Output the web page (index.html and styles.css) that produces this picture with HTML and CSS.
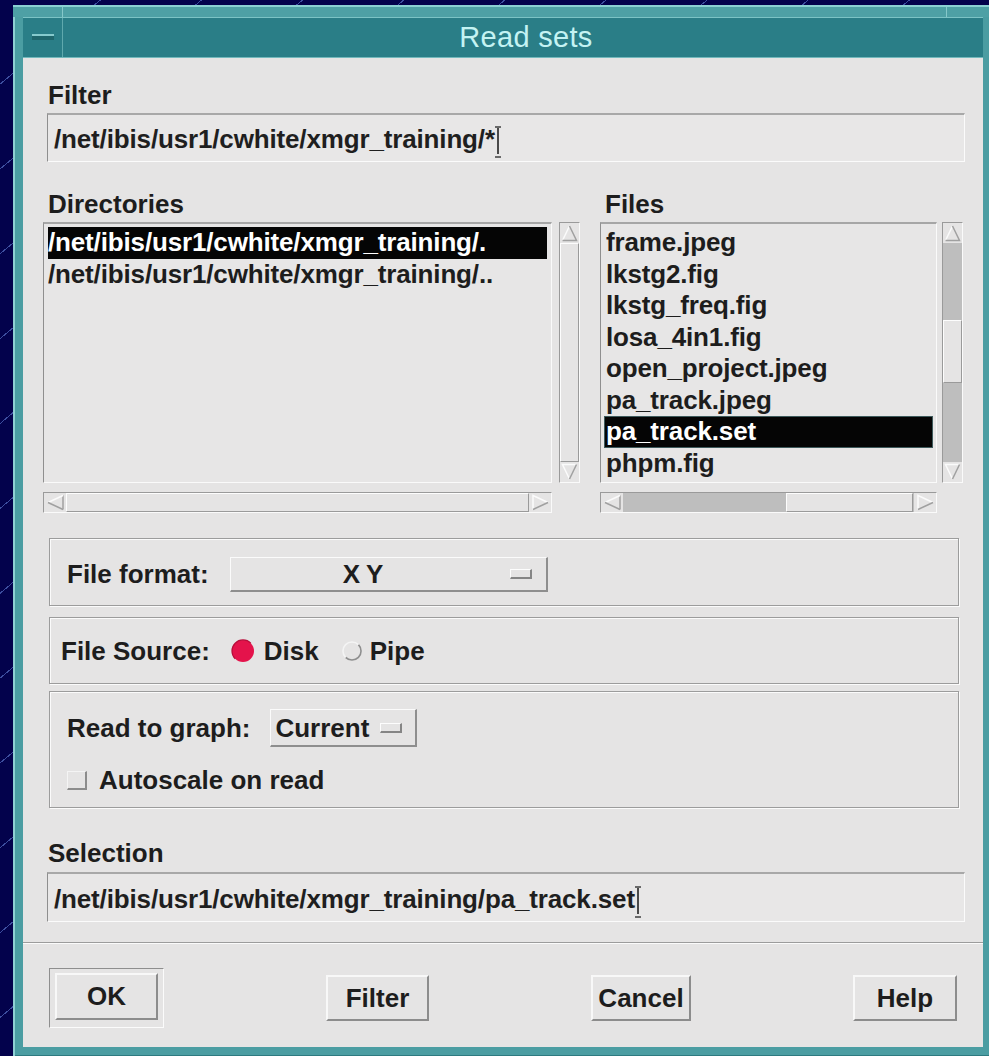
FILE: index.html
```html
<!DOCTYPE html>
<html lang="en">
<head>
<meta charset="utf-8">
<title>Read sets</title>
<link rel="stylesheet" href="styles.css">
</head>
<body>
<div class="desktop">
  <div class="window">
    <div class="frame-top">
      <div class="corner corner-l"></div>
      <div class="edge"></div>
      <div class="corner corner-r"></div>
    </div>
    <div class="titlebar">
      <div class="wm-menu"><span class="wm-minus"></span></div>
      <div class="wm-title">Read sets</div>
    </div>

    <div class="dialog">
      <div class="label label-filter">Filter</div>
      <div class="textfield textfield-filter">/net/ibis/usr1/cwhite/xmgr_training/*<span class="caret"></span></div>

      <div class="browser">
        <div class="col col-dirs">
          <div class="label col-label">Directories</div>
          <div class="pane">
            <div class="list">
              <div class="row selected">/net/ibis/usr1/cwhite/xmgr_training/.</div>
              <div class="row">/net/ibis/usr1/cwhite/xmgr_training/..</div>
            </div>
            <div class="vscroll">
              <div class="arrow arrow-v">
                <svg width="19" height="20" viewBox="0 0 19 20"><path d="M2.5 17.5 L9.5 3" stroke="#fbfbfb" stroke-width="1.5" fill="none"/><path d="M9.5 3 L16.5 17.5 L2.5 17.5" stroke="#a0a0a0" stroke-width="1.5" fill="none"/></svg>
              </div>
              <div class="slider grow"></div>
              <div class="arrow arrow-v">
                <svg width="19" height="20" viewBox="0 0 19 20"><path d="M9.5 17 L2.5 2.5 L16.5 2.5" stroke="#fbfbfb" stroke-width="1.5" fill="none"/><path d="M16.5 2.5 L9.5 17" stroke="#a0a0a0" stroke-width="1.5" fill="none"/></svg>
              </div>
            </div>
            <div class="hscroll">
              <div class="arrow arrow-h">
                <svg width="21" height="19" viewBox="0 0 21 19"><path d="M18 16.5 L18 2.5" stroke="#a0a0a0" stroke-width="1.5" fill="none"/><path d="M3 9.5 L18 2.5" stroke="#fbfbfb" stroke-width="1.5" fill="none"/><path d="M3 9.5 L18 16.5" stroke="#a0a0a0" stroke-width="1.5" fill="none"/></svg>
              </div>
              <div class="slider grow"></div>
              <div class="arrow arrow-h">
                <svg width="21" height="19" viewBox="0 0 21 19"><path d="M3 16.5 L3 2.5 L18 9.5" stroke="#fbfbfb" stroke-width="1.5" fill="none"/><path d="M18 9.5 L3 16.5" stroke="#a0a0a0" stroke-width="1.5" fill="none"/></svg>
              </div>
            </div>
          </div>
        </div>

        <div class="col col-files">
          <div class="label col-label">Files</div>
          <div class="pane">
            <div class="list list-files">
              <div class="row">frame.jpeg</div>
              <div class="row">lkstg2.fig</div>
              <div class="row">lkstg_freq.fig</div>
              <div class="row">losa_4in1.fig</div>
              <div class="row">open_project.jpeg</div>
              <div class="row">pa_track.jpeg</div>
              <div class="row selected">pa_track.set</div>
              <div class="row">phpm.fig</div>
            </div>
            <div class="vscroll">
              <div class="arrow arrow-v">
                <svg width="19" height="20" viewBox="0 0 19 20"><path d="M2.5 17.5 L9.5 3" stroke="#fbfbfb" stroke-width="1.5" fill="none"/><path d="M9.5 3 L16.5 17.5 L2.5 17.5" stroke="#a0a0a0" stroke-width="1.5" fill="none"/></svg>
              </div>
              <div class="trough" style="height: 77px"></div>
              <div class="slider" style="height: 63px"></div>
              <div class="trough grow"></div>
              <div class="arrow arrow-v">
                <svg width="19" height="20" viewBox="0 0 19 20"><path d="M9.5 17 L2.5 2.5 L16.5 2.5" stroke="#fbfbfb" stroke-width="1.5" fill="none"/><path d="M16.5 2.5 L9.5 17" stroke="#a0a0a0" stroke-width="1.5" fill="none"/></svg>
              </div>
            </div>
            <div class="hscroll">
              <div class="arrow arrow-h">
                <svg width="21" height="19" viewBox="0 0 21 19"><path d="M18 16.5 L18 2.5" stroke="#a0a0a0" stroke-width="1.5" fill="none"/><path d="M3 9.5 L18 2.5" stroke="#fbfbfb" stroke-width="1.5" fill="none"/><path d="M3 9.5 L18 16.5" stroke="#a0a0a0" stroke-width="1.5" fill="none"/></svg>
              </div>
              <div class="trough" style="width: 163px"></div>
              <div class="slider" style="width: 127px"></div>
              <div class="trough grow"></div>
              <div class="arrow arrow-h">
                <svg width="21" height="19" viewBox="0 0 21 19"><path d="M3 16.5 L3 2.5 L18 9.5" stroke="#fbfbfb" stroke-width="1.5" fill="none"/><path d="M18 9.5 L3 16.5" stroke="#a0a0a0" stroke-width="1.5" fill="none"/></svg>
              </div>
            </div>
          </div>
        </div>
      </div>

      <div class="group group-format">
        <span class="label">File format:</span>
        <div class="option option-format">
          <span class="option-text">XY</span>
          <span class="indicator"></span>
        </div>
      </div>

      <div class="group group-source">
        <span class="label">File Source:</span>
        <span class="radio radio-on">
          <svg width="26" height="26" viewBox="0 0 26 26"><circle cx="13" cy="13" r="11" fill="#e4134b"/><path d="M5.2 20.8 A11 11 0 0 1 20.8 5.2" stroke="#b80d3a" stroke-width="1.2" fill="none"/></svg>
        </span>
        <span class="label radio-label">Disk</span>
        <span class="radio radio-off">
          <svg width="26" height="26" viewBox="0 0 26 26"><path d="M19.4 6.6 A9 9 0 0 1 6.6 19.4" stroke="#8e8e8e" stroke-width="1.6" fill="none"/><path d="M6.6 19.4 A9 9 0 0 1 19.4 6.6" stroke="#f4f4f4" stroke-width="1.6" fill="none"/></svg>
        </span>
        <span class="label radio-label radio-label-off">Pipe</span>
      </div>

      <div class="group group-graph">
        <div class="graph-row">
          <span class="label">Read to graph:</span>
          <div class="option option-graph">
            <span class="option-text">Current</span>
            <span class="indicator"></span>
          </div>
        </div>
        <div class="check-row">
          <span class="checkbox"></span>
          <span class="label">Autoscale on read</span>
        </div>
      </div>

      <div class="label label-selection">Selection</div>
      <div class="textfield textfield-selection">/net/ibis/usr1/cwhite/xmgr_training/pa_track.set<span class="caret"></span></div>

      <div class="separator"></div>

      <div class="buttons">
        <div class="default-ring"><div class="btn btn-ok">OK</div></div>
        <div class="btn btn-filter">Filter</div>
        <div class="btn btn-cancel">Cancel</div>
        <div class="btn btn-help">Help</div>
      </div>
    </div>
  </div>
</div>
</body>
</html>
```

FILE: styles.css
```css
* {
  box-sizing: border-box;
}

html,
body {
  margin: 0;
  padding: 0;
}

body {
  width: 989px;
  height: 1056px;
  overflow: hidden;
  background-color: #03024c;
  background-image: repeating-linear-gradient(140deg, transparent 0 64px, rgba(100, 130, 215, 0.6) 64px 65px);
  font-family: "Liberation Sans", Arial, sans-serif;
  color: #1d1d1d;
}

/* ---------- window manager frame ---------- */

.desktop {
  padding: 5px 0 0 13px;
}

.window {
  width: 980px;
  height: 1052px;
  background: #4b9da2;
  padding: 0 10px 10px 10px;
  display: flex;
  flex-direction: column;
  box-shadow: inset 2px 0 0 #8ed0d2, inset -2px 0 0 #2d7a80, inset 0 -2px 0 #2d7a80;
}

.frame-top {
  height: 12px;
  margin: 0 -10px;
  display: flex;
  border-top: 2px solid #8ad0d2;
  background: #4ea0a5;
}

.corner-l {
  width: 50px;
  border-right: 1px solid #86c8ca;
}

.edge {
  flex: 1;
}

.corner-r {
  width: 47px;
  border-left: 1px solid #86c8ca;
}

.titlebar {
  height: 41px;
  display: flex;
  background: #2a7e87;
  border-top: 1px solid #7cc3c5;
  border-bottom: 1px solid #72b9bc;
}

.wm-menu {
  width: 40px;
  border-right: 1px solid #5fa9ad;
  display: flex;
  align-items: center;
  justify-content: center;
}

.wm-minus {
  display: block;
  width: 22px;
  height: 6px;
  margin-top: -1px;
  background: #1f666c;
  border-top: 2px solid #86cacd;
}

.wm-title {
  flex: 1;
  text-align: center;
  font-size: 29px;
  line-height: 39px;
  letter-spacing: 0.3px;
  color: #c4f3f3;
  padding-left: 6px;
}

/* ---------- dialog body ---------- */

.dialog {
  flex: 1;
  background: #e5e4e4;
  padding: 0 18px 0 24px;
  display: flex;
  flex-direction: column;
}

.label {
  font-size: 26px;
  line-height: 30px;
  font-weight: bold;
  white-space: nowrap;
  color: #1d1d1d;
}

.label-filter {
  margin-top: 22px;
  padding-left: 1px;
}

.textfield {
  margin-top: 3px;
  height: 49px;
  padding: 9px 6px 0;
  background: #e8e7e7;
  border-top: 2px solid #a8a8a8;
  border-left: 1px solid #8e8e8e;
  border-right: 1px solid #fbfbfb;
  border-bottom: 1px solid #fbfbfb;
  font-size: 26px;
  line-height: 30px;
  font-weight: bold;
  letter-spacing: -0.15px;
  white-space: nowrap;
  color: #1f1f1f;
}

.textfield-selection {
  margin-top: 4px;
  height: 50px;
  padding-top: 10px;
}

/* I-beam insertion cursor */
.caret {
  display: inline-block;
  position: relative;
  width: 6px;
  height: 28px;
  margin-left: 0;
  vertical-align: -6px;
}

.caret::before {
  content: "";
  position: absolute;
  left: 2px;
  top: 0;
  width: 2px;
  height: 28px;
  background: #4a4a4a;
}

.caret::after {
  content: "";
  position: absolute;
  left: 0;
  top: 0;
  width: 6px;
  height: 28px;
  border-top: 2px solid #6a6a6a;
  border-bottom: 2px solid #6a6a6a;
}

/* ---------- directory / file browser ---------- */

.browser {
  display: flex;
  gap: 20px;
  margin-left: -4px;
  width: 920px;
}

.col-dirs {
  width: 537px;
}

.col-files {
  width: 363px;
}

.col-label {
  margin-top: 27px;
  padding-left: 5px;
}

.pane {
  margin-top: 3px;
  display: grid;
  grid-template-columns: 1fr 21px;
  grid-template-rows: 261px 21px;
  column-gap: 7px;
  row-gap: 9px;
}

.col-files .pane {
  column-gap: 5px;
}

.list {
  background: #e7e6e6;
  border-top: 2px solid #a6a6a6;
  border-left: 1px solid #8f8f8f;
  border-right: 1px solid #fafafa;
  border-bottom: 1px solid #fafafa;
  padding: 3px 4px 0;
  overflow: hidden;
}

.list-files {
  padding: 3px 3px 0;
}

.row {
  height: 31.5px;
  line-height: 31.5px;
  font-size: 26px;
  font-weight: bold;
  letter-spacing: -0.15px;
  white-space: nowrap;
  overflow: hidden;
  color: #1d1d1d;
}

.list-files .row {
  padding-left: 2px;
}

.row.selected {
  background: #050505;
  color: #ffffff;
}

.list-files .row.selected {
  box-shadow: inset 0 0 0 1px #3e5a5c;
}

.vscroll,
.hscroll {
  display: flex;
  background: #bdbdbd;
  border-top: 1px solid #9a9a9a;
  border-left: 1px solid #9a9a9a;
  border-right: 1px solid #fafafa;
  border-bottom: 1px solid #fafafa;
}

.vscroll {
  flex-direction: column;
}

.arrow {
  flex: none;
  display: flex;
  align-items: center;
  justify-content: center;
  background: #e5e4e4;
}

.arrow-v {
  height: 20px;
}

.arrow-h {
  width: 22px;
}

.slider {
  flex: none;
  background: #e5e4e4;
  border-top: 1px solid #fdfdfd;
  border-left: 1px solid #fdfdfd;
  border-right: 1px solid #9a9a9a;
  border-bottom: 1px solid #9a9a9a;
}

.trough {
  flex: none;
  background: #bebebe;
}

.grow {
  flex: 1;
}

/* ---------- option frames ---------- */

.group {
  margin: 25px 6px 0 2px;
  border: 1px solid #9c9c9c;
  box-shadow: inset 1px 1px 0 #fbfbfb, 1px 1px 0 #fbfbfb;
  display: flex;
  align-items: center;
}

.group-format {
  height: 68px;
  padding: 4px 0 0 17px;
}

.group-source {
  margin-top: 11px;
  height: 67px;
  padding-left: 11px;
}

.group-graph {
  margin-top: 7px;
  height: 117px;
  padding: 17px 0 0 17px;
  flex-direction: column;
  align-items: flex-start;
}

.option {
  display: flex;
  align-items: center;
  background: #e5e4e4;
  border-top: 1px solid #fbfbfb;
  border-left: 1px solid #fbfbfb;
  border-right: 2px solid #8e8e8e;
  border-bottom: 2px solid #8e8e8e;
  font-size: 26px;
  line-height: 30px;
  font-weight: bold;
  color: #1d1d1d;
}

.option-format {
  width: 318px;
  height: 35px;
  margin-left: 21px;
}

.option-format .option-text {
  flex: 1;
  text-align: center;
  letter-spacing: 6px;
  padding-right: 8px;
}

.option-format .indicator {
  margin-right: 14px;
}

.graph-row {
  display: flex;
  align-items: center;
  height: 38px;
}

.option-graph {
  width: 147px;
  height: 38px;
  margin-left: 20px;
  padding-left: 4px;
}

.option-graph .indicator {
  margin-left: 11px;
}

.indicator {
  display: block;
  width: 22px;
  height: 10px;
  border-top: 1px solid #fdfdfd;
  border-left: 1px solid #fdfdfd;
  border-right: 2px solid #858585;
  border-bottom: 2px solid #858585;
}

.radio {
  display: flex;
  margin-left: 20px;
}

.radio-off {
  margin-left: 20px;
}

.radio-label {
  margin-left: 8px;
}

.radio-label-off {
  margin-left: 5px;
}

.check-row {
  margin-top: 18px;
  height: 30px;
  display: flex;
  align-items: center;
}

.checkbox {
  display: block;
  width: 20px;
  height: 19px;
  margin-right: 12px;
  border-top: 1px solid #f4f4f4;
  border-left: 1px solid #f4f4f4;
  border-right: 2px solid #8c8c8c;
  border-bottom: 2px solid #8c8c8c;
}

.label-selection {
  margin-top: 30px;
  padding-left: 1px;
}

/* ---------- action area ---------- */

.separator {
  margin: 20px -18px 0 -24px;
  height: 2px;
  border-top: 1px solid #9c9c9c;
  border-bottom: 1px solid #fbfbfb;
}

.buttons {
  margin: 24px 8px 0 2px;
  display: flex;
  justify-content: space-between;
  align-items: center;
}

.default-ring {
  width: 115px;
  height: 60px;
  padding: 4px 6px 7px 5px;
  border-top: 1px solid #8e8e8e;
  border-left: 1px solid #8e8e8e;
  border-right: 1px solid #fbfbfb;
  border-bottom: 1px solid #fbfbfb;
}

.btn {
  height: 46px;
  display: flex;
  align-items: center;
  justify-content: center;
  background: #e5e4e4;
  border-top: 2px solid #f8f8f8;
  border-left: 2px solid #f8f8f8;
  border-right: 2px solid #8c8c8c;
  border-bottom: 2px solid #8c8c8c;
  font-size: 26px;
  font-weight: bold;
  color: #1d1d1d;
}

.btn-ok {
  width: 103px;
  height: 47px;
}

.btn-filter {
  width: 103px;
}

.btn-cancel {
  width: 100px;
}

.btn-help {
  width: 104px;
}
```
